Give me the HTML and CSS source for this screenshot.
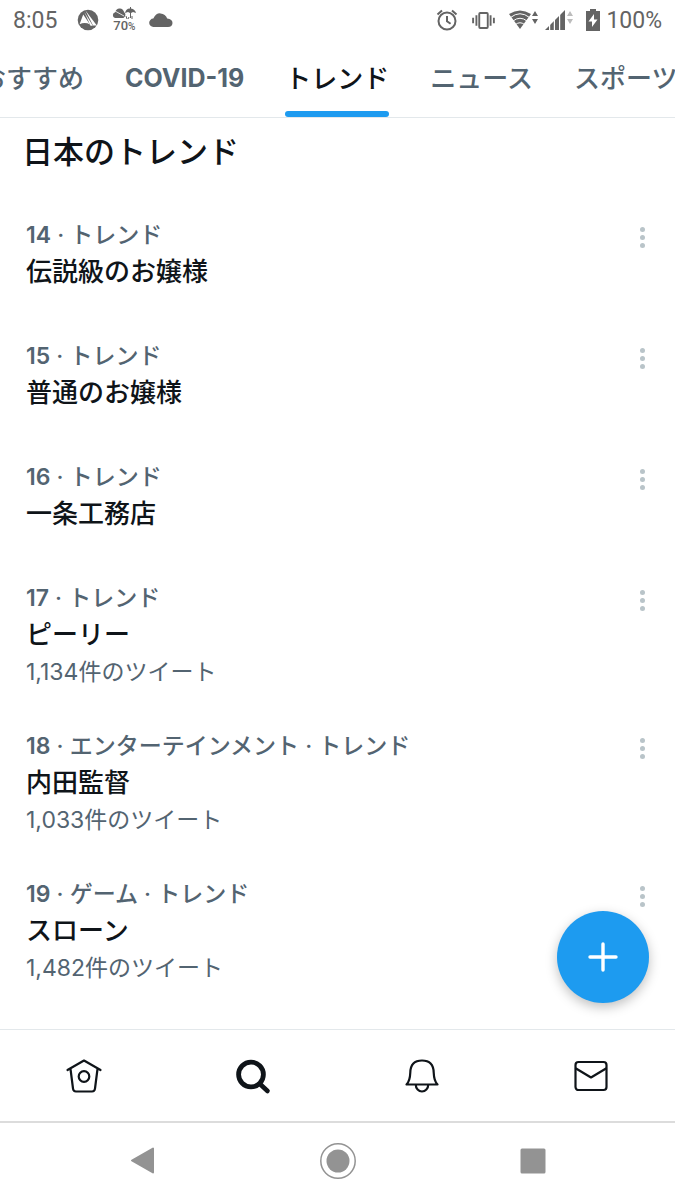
FILE: index.html
```html
<!DOCTYPE html>
<html lang="ja">
<head>
<meta charset="utf-8">
<meta name="viewport" content="width=device-width, initial-scale=1">
<title>日本のトレンド</title>
<link rel="stylesheet" href="styles.css">
</head>
<body>
<div class="screen">
  <div class="status">
    <div class="status-left">
      <span>8:05</span>
      <svg width="22" height="22" viewBox="0 0 22 22"><circle cx="11" cy="11" r="10.3" fill="#646464"/><path d="M8.500 1.500 19.800 16.500 16 16.500Z" fill="#fff"/><path d="M7.300 3 15.800 16.800 13.500 16.800Z" fill="#fff"/><path d="M6.200 5.500 13 15.600Q8 12.800 2.600 15.300Z" fill="#fff"/></svg>
      <span class="weather">
        <svg width="24" height="13" viewBox="0 0 24 13" fill="#646464"><path d="M3 11A3 3 0 0 1 3.2 5.2Q4.5 1 8 1.500 11 1.600 12.200 5.300 15 8 11.500 11Z"/><path d="M13 6Q14 1.200 18 1.400V0h1v1.400Q23 2 24 6L21 5 19 6V11H18V6L16 5Z"/><path d="m3 4 9 5M10 1l4 3" stroke="#fff" stroke-width=".8"/><path d="m14 9 1 3M17 10l-1 2M20 9v3" stroke="#646464" stroke-width="1"/></svg>
        <span>70<small>%</small></span>
      </span>
      <svg width="24" height="14" viewBox="0 0 24 14"><path d="M4.5 14A4.200 4.200 0 0 1 4.300 5.600Q7 0 11.500.4 16.500.7 18.200 5.500 23.500 6 23.500 10 23.300 14 19 14Z" fill="#646464"/></svg>
    </div>
    <div class="status-right">
      <svg width="22" height="22" viewBox="0 0 22 22" fill="none" stroke="#646464" stroke-width="2"><circle cx="11" cy="12" r="8.500"/><path d="M11 7v5.200l3.600 2.600M1.500 5.500 6 1.500M20.500 5.500 16 1.500"/></svg>
      <svg class="vibrate" width="23" height="17" viewBox="0 0 24 18" fill="none" stroke="#646464" stroke-width="2"><rect x="7.500" y="1" width="9" height="16" rx="1"/><path d="M1 6v6M4.500 3.500v11M19.500 3.500v11M23 6v6"/></svg>
      <svg width="30" height="20" viewBox="0 0 30 20"><path d="M0 4Q11 -3 22 4L11 19Z" fill="#646464"/><path d="M1.500 7.500Q11 0 20.500 7.500M4 11Q11 5.500 18 11M6.500 14.500Q11 11 15.500 14.500" fill="none" stroke="#fff" stroke-width="1"/><path d="m26 1 3 5h-6ZM26 14l3-5h-6Z" fill="#646464"/></svg>
      <svg width="28" height="20" viewBox="0 0 28 20"><path d="M0 20 20 0V20Z" fill="#646464"/><path d="M4.600 12v8M9.400 8v12M14.600 4v16" stroke="#fff" stroke-width="1.200"/><path d="m25 1 3 5h-6ZM25 14l3-5h-6Z" fill="#bcbcbc"/></svg>
      <svg class="battery" width="14" height="22" viewBox="0 0 14 22"><path d="M4 0h6v2h4v20H0V2h4Z" fill="#646464"/><path d="M8 5 2.500 12.500H6V18l5.500-7.500H8Z" fill="#fff"/></svg>
      <span>100%</span>
    </div>
  </div>

  <nav class="tabs" aria-label="カテゴリー">
    <a href="#recommend" class="tab">おすすめ</a>
    <a href="#covid" class="tab">COVID-19</a>
    <a href="#trends" class="tab active" aria-current="page">トレンド</a>
    <a href="#news" class="tab">ニュース</a>
    <a href="#sports" class="tab">スポーツ</a>
  </nav>

  <main class="content">
    <h1>日本のトレンド</h1>
    <ul class="trends">
      <li class="trend"><div class="text"><p class="meta"><b>14</b> · トレンド</p><h2>伝説級のお嬢様</h2></div><button class="more" aria-label="もっと見る"><i></i><i></i><i></i></button></li>
      <li class="trend"><div class="text"><p class="meta"><b>15</b> · トレンド</p><h2>普通のお嬢様</h2></div><button class="more" aria-label="もっと見る"><i></i><i></i><i></i></button></li>
      <li class="trend"><div class="text"><p class="meta"><b>16</b> · トレンド</p><h2>一条工務店</h2></div><button class="more" aria-label="もっと見る"><i></i><i></i><i></i></button></li>
      <li class="trend"><div class="text"><p class="meta"><b>17</b> · トレンド</p><h2>ピーリー</h2><p class="count">1,134件のツイート</p></div><button class="more" aria-label="もっと見る"><i></i><i></i><i></i></button></li>
      <li class="trend"><div class="text"><p class="meta"><b>18</b> · エンターテインメント · トレンド</p><h2>内田監督</h2><p class="count">1,033件のツイート</p></div><button class="more" aria-label="もっと見る"><i></i><i></i><i></i></button></li>
      <li class="trend"><div class="text"><p class="meta"><b>19</b> · ゲーム · トレンド</p><h2>スローン</h2><p class="count">1,482件のツイート</p></div><button class="more" aria-label="もっと見る"><i></i><i></i><i></i></button></li>
    </ul>
    <button class="compose" aria-label="ツイートする"><svg width="30" height="30" viewBox="0 0 30 30"><path d="M15 2v26M2 15h26" stroke="#fff" stroke-width="3.400" stroke-linecap="round"/></svg></button>
  </main>

  <nav class="bottom" aria-label="メイン">
    <a href="#home" aria-label="ホーム"><svg width="38" height="38" viewBox="0 0 38 38" fill="none" stroke="#0f1419" stroke-width="2.200" stroke-linecap="round" stroke-linejoin="round"><path d="M2.500 13 19 3.500 35.500 13M5.500 12 8 31.500Q8.300 34.500 11 34.500H27Q29.700 34.500 30 31.500L32.500 12"/><circle cx="19" cy="19.500" r="5.300"/></svg></a>
    <a href="#search" aria-label="検索"><svg width="38" height="38" viewBox="0 0 38 38" fill="none" stroke="#0f1419" stroke-linecap="round"><circle cx="17" cy="17.500" r="12.400" stroke-width="4.800"/><path d="m26.500 27.500 7 6.500" stroke-width="4.600"/></svg></a>
    <a href="#notifications" aria-label="通知"><svg width="38" height="38" viewBox="0 0 38 38" fill="none" stroke="#0f1419" stroke-width="2.200" stroke-linecap="round" stroke-linejoin="round"><path d="M3.500 27.500H34.500Q31 24 30.700 15.500C30.500 7.500 26 3.500 19 3.500S7.500 7.500 7.300 15.500Q7 24 3.500 27.500ZM12.800 28A6.200 6.500 0 0 0 25.200 28"/></svg></a>
    <a href="#messages" aria-label="メッセージ"><svg width="38" height="38" viewBox="0 0 38 38" fill="none" stroke="#0f1419" stroke-width="2.200" stroke-linecap="round" stroke-linejoin="round"><rect x="3.500" y="5" width="31" height="28" rx="3"/><path d="M4 11.500 19 20.500 34 11.500"/></svg></a>
  </nav>

  <div class="system">
    <button aria-label="戻る"><svg width="38" height="38" viewBox="0 0 38 38"><path d="M8 18.500 29 6.500V30.500Z" fill="#939393" stroke="#939393" stroke-width="2" stroke-linejoin="round"/></svg></button>
    <button aria-label="ホーム画面"><svg width="38" height="38" viewBox="0 0 38 38"><circle cx="19" cy="19" r="17.200" fill="none" stroke="#939393" stroke-width="1.500"/><circle cx="19" cy="19" r="11.500" fill="#939393"/></svg></button>
    <button aria-label="アプリ履歴"><svg width="38" height="38" viewBox="0 0 38 38"><rect x="6.500" y="6.500" width="25" height="25" rx="1.500" fill="#939393"/></svg></button>
  </div>
</div>
</body>
</html>
```
FILE: styles.css
```css
* { box-sizing: border-box; }
body {
  margin: 0;
  background: #fff;
  color: #0f1419;
  font-family: Inter, "Noto Sans CJK JP", sans-serif;
}
h1, h2, p, ul { margin: 0; padding: 0; }
ul { list-style: none; }
a { color: inherit; text-decoration: none; }
button { border: 0; padding: 0; background: none; font: inherit; cursor: pointer; }
svg { display: block; }

.screen {
  display: flex;
  flex-direction: column;
  min-height: 100vh;
  overflow: hidden;
}

.status {
  display: flex;
  justify-content: space-between;
  height: 40px;
  padding: 0 13px;
  color: #646464;
  font-family: Roboto, sans-serif;
  font-size: 23px;
}
.status-left, .status-right { display: flex; align-items: center; }
.status-left { gap: 13px; }
.status-left > span:first-child { margin-right: 7px; }
.status-right { gap: 6px; }
.vibrate { margin: 0 8px; }
.battery { margin-left: 7px; }
.weather {
  display: flex;
  flex-direction: column;
  align-items: center;
  font-size: 13px;
  font-weight: 500;
  line-height: 12px;
}
.weather small { font-size: 10px; }

.tabs {
  display: flex;
  gap: 41px;
  height: 78px;
  margin-left: -20px;
  border-bottom: 1px solid #e3e8eb;
  font-size: 26px;
  line-height: 77px;
  color: #536471;
  font-weight: 500;
}
.tab { flex: none; position: relative; }
.tab:nth-child(2) { font-size: 25px; font-weight: 700; }
.active { color: #0f1419; }
.active::after {
  content: "";
  position: absolute;
  left: 0;
  right: 0;
  bottom: 0;
  height: 6px;
  border-radius: 3px;
  background: #1d9bf0;
}

.content { position: relative; flex: 1; }
h1 {
  padding: 10px 22px 21px;
  font-size: 31px;
  line-height: 48px;
  font-weight: 500;
}
.trend {
  display: flex;
  justify-content: space-between;
  align-items: flex-start;
  min-height: 121px;
  padding: 24px 24px 22px 26px;
}
.text { display: flex; flex-direction: column; gap: 9px; }
.meta, .count { font-size: 23px; line-height: 28px; color: #536471; }
.meta { font-weight: 500; }
.meta b { font-weight: 600; }
.count { font-weight: 400; }
h2 { font-size: 26px; line-height: 28px; font-weight: 500; }
.more {
  display: flex;
  flex-direction: column;
  align-items: center;
  justify-content: center;
  gap: 3px;
  width: 18px;
  height: 32px;
}
.more i { width: 5px; height: 5px; border-radius: 50%; background: #b9c4c9; }

.compose {
  position: absolute;
  right: 26px;
  bottom: 26px;
  display: grid;
  place-items: center;
  width: 92px;
  height: 92px;
  border-radius: 50%;
  background: #1d9bf0;
  box-shadow: 0 4px 12px rgba(0, 0, 0, .25);
}

.bottom {
  display: grid;
  grid-template-columns: repeat(4, 1fr);
  place-items: center;
  height: 92px;
  border-top: 1px solid #e3e8eb;
}
.system {
  display: flex;
  justify-content: space-around;
  align-items: center;
  height: 79px;
  padding: 0 45px 2px;
  border-top: 2px solid #dcdcdc;
}
```
